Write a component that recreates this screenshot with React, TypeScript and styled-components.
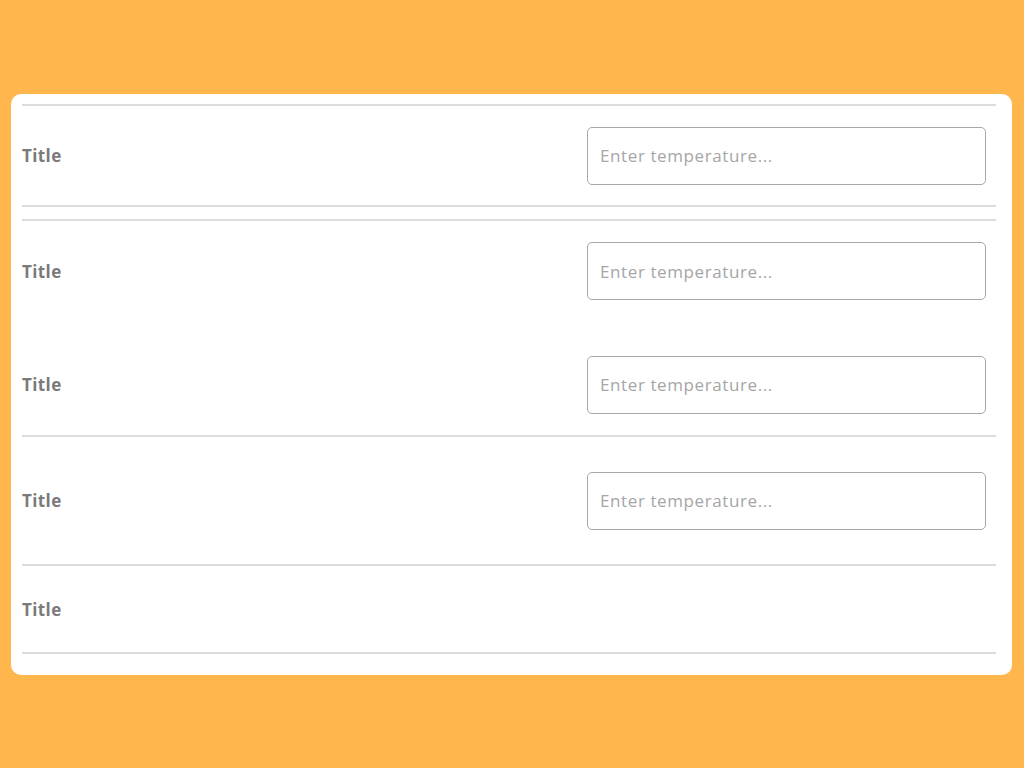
import React from "react";
import styled, { createGlobalStyle } from "styled-components";

const Global = createGlobalStyle`
  html, body { margin: 0; padding: 0; background: #ffb74d; }
  body { font-family: "Open Sans", Inter, sans-serif; }
`;

const Page = styled.div`
  width: 1024px;
  height: 768px;
  background: #ffb74d;
  padding: 94px 12px 0 11px;
  box-sizing: border-box;
`;

const Card = styled.div`
  background: #ffffff;
  border-radius: 10px;
  padding: 10px 16px 21px 11px;
  display: flex;
  flex-direction: column;
`;

const Row = styled.div<{ $h: number; $top?: boolean; $bottom?: boolean; $mb?: number }>`
  display: flex;
  align-items: center;
  justify-content: space-between;
  height: ${(p) => p.$h}px;
  box-sizing: border-box;
  border-top: ${(p) => (p.$top ? "2px solid #dcdcdc" : "none")};
  border-bottom: ${(p) => (p.$bottom ? "2px solid #dcdcdc" : "none")};
  margin-bottom: ${(p) => p.$mb ?? 0}px;
  padding-right: 10px;
`;

const Title = styled.span`
  font-family: "Open Sans", Inter, sans-serif;
  font-weight: 700;
  font-size: 17px;
  letter-spacing: 0.4px;
  color: #7a7a7a;
`;

const Input = styled.input`
  width: 399px;
  height: 58px;
  box-sizing: border-box;
  border: 1.5px solid #a8a8a8;
  border-radius: 5px;
  padding: 0 12px;
  font-family: "Open Sans", Inter, sans-serif;
  font-size: 17px;
  letter-spacing: 0.6px;
  color: #555;
  outline: none;
  background: #fff;
  &::placeholder {
    color: #a6a6a6;
  }
`;

export default function App() {
  return (
    <>
      <Global />
      <Page>
        <Card>
          <Row $h={103} $top $bottom $mb={12}>
            <Title>Title</Title>
            <Input placeholder="Enter temperature..." />
          </Row>
          <Row $h={102} $top $mb={13}>
            <Title>Title</Title>
            <Input placeholder="Enter temperature..." />
          </Row>
          <Row $h={103} $bottom>
            <Title>Title</Title>
            <Input placeholder="Enter temperature..." />
          </Row>
          <Row $h={129} $bottom>
            <Title>Title</Title>
            <Input placeholder="Enter temperature..." />
          </Row>
          <Row $h={88} $bottom>
            <Title>Title</Title>
          </Row>
        </Card>
      </Page>
    </>
  );
}
